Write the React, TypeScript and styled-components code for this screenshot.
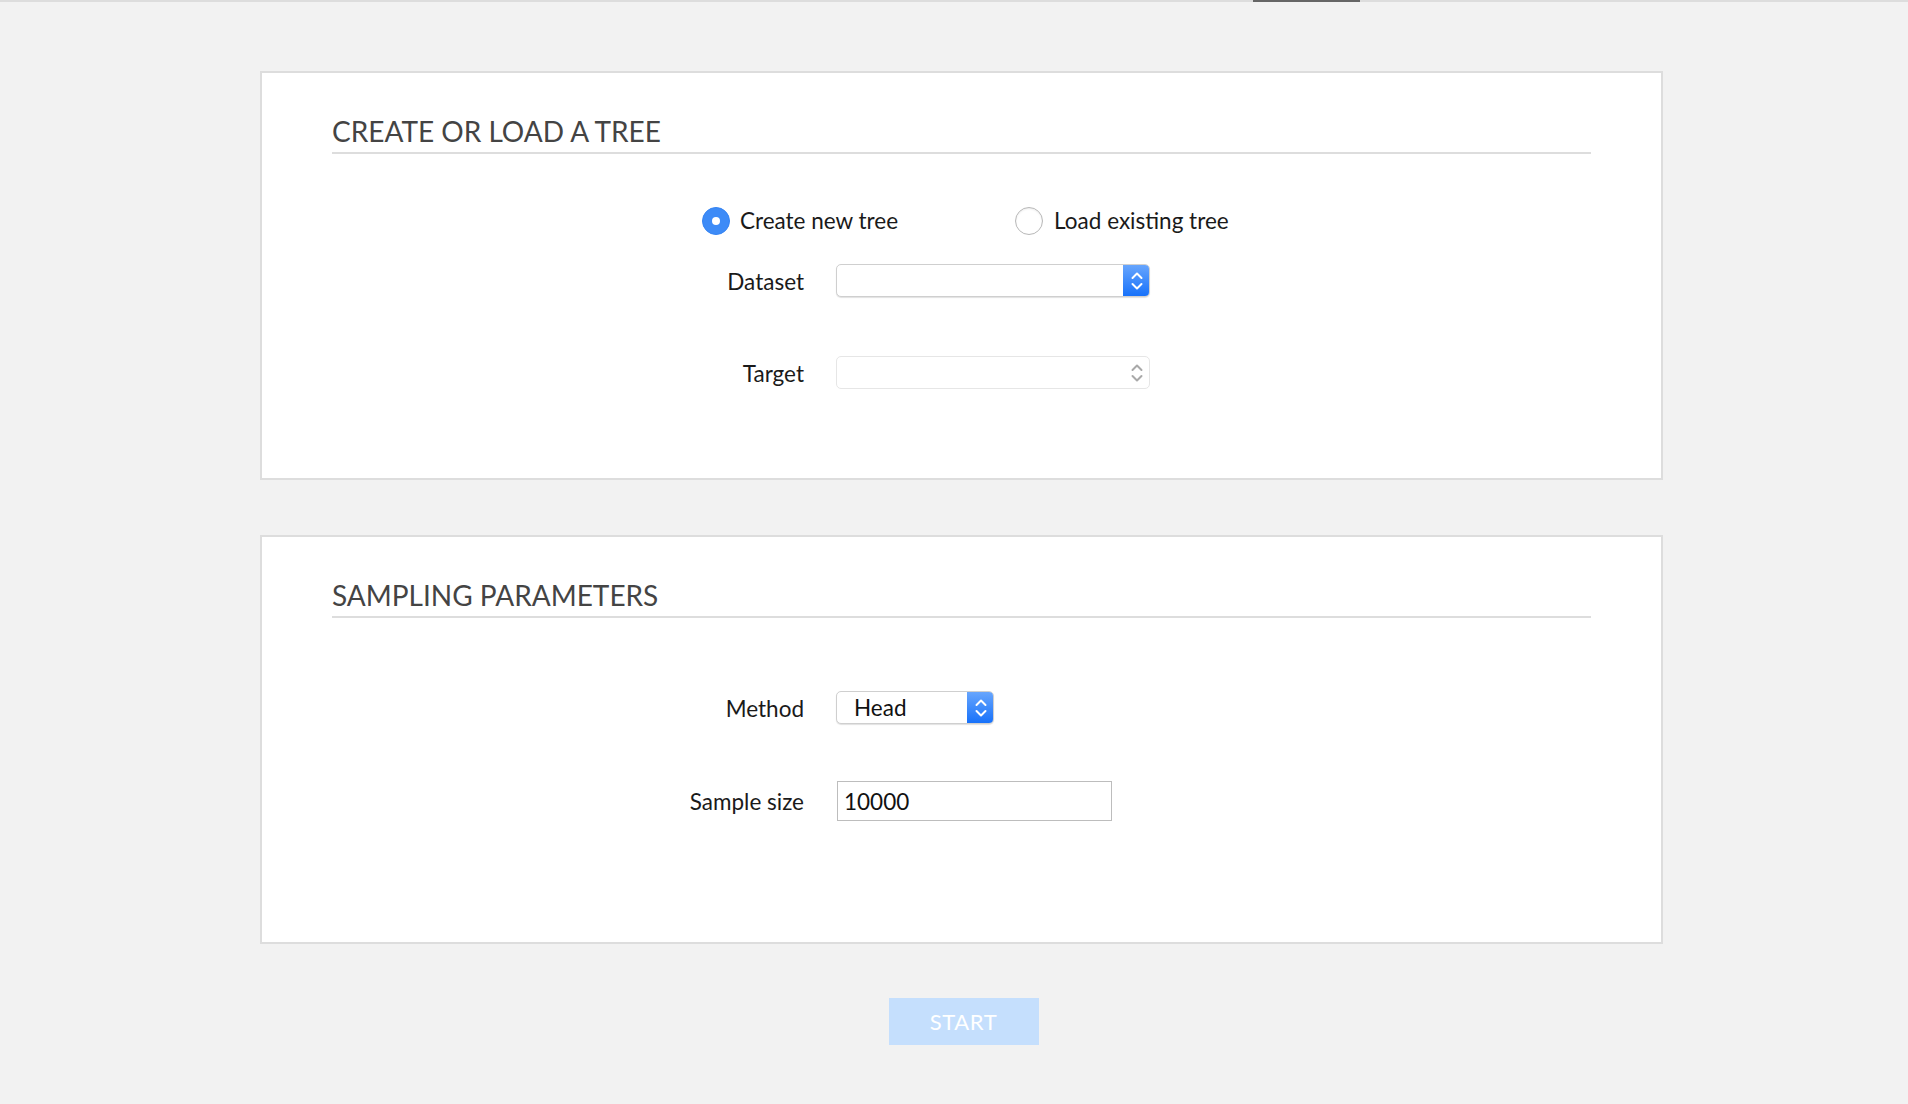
import React from 'react';
import styled, { createGlobalStyle } from 'styled-components';

const GlobalStyle = createGlobalStyle`
  html, body {
    margin: 0;
    padding: 0;
    background: #f2f2f2;
  }
  body {
    font-family: Lato, "Noto Sans", "Liberation Sans", sans-serif;
    color: #1a1a1a;
  }
`;

const TopBar = styled.div`
  height: 2px;
  background: #dddddd;
  display: flex;
`;

const TopIndicator = styled.div`
  margin-left: 1253px;
  width: 107px;
  height: 2px;
  background: #666666;
`;

const Page = styled.div`
  padding: 69px 245px 60px 260px;
  display: flex;
  flex-direction: column;
  gap: 55px;
`;

const Card = styled.section`
  box-sizing: border-box;
  min-height: 409px;
  background: #ffffff;
  border: 2px solid #dddddd;
  padding: 41px 70px 40px;
`;

const CardTitle = styled.h2`
  margin: 0;
  font-size: 28px;
  line-height: 34px;
  font-weight: 400;
  color: #444444;
  text-transform: uppercase;
  padding-bottom: 4px;
  border-bottom: 2px solid #dddddd;
`;

const RadioRow = styled.div`
  display: flex;
  justify-content: flex-start;
  gap: 117px;
  margin-top: 53px;
  padding-left: 370px;
`;

const RadioOption = styled.label<{ $gap: number }>`
  display: flex;
  align-items: center;
  gap: ${({ $gap }) => $gap}px;
  font-size: 22.5px;
  line-height: 28px;
  cursor: pointer;
`;

const RadioDot = styled.span<{ $checked?: boolean }>`
  box-sizing: border-box;
  width: 28px;
  height: 28px;
  border-radius: 50%;
  display: flex;
  align-items: center;
  justify-content: center;
  background: ${({ $checked }) => ($checked ? '#3d8bf7' : '#ffffff')};
  border: 1px solid ${({ $checked }) => ($checked ? '#3584f3' : '#b8b8b8')};
  box-shadow: ${({ $checked }) => ($checked ? 'none' : 'inset 0 1px 2px rgba(0,0,0,0.08)')};

  &::after {
    content: '';
    width: 8px;
    height: 8px;
    border-radius: 50%;
    background: #ffffff;
    display: ${({ $checked }) => ($checked ? 'block' : 'none')};
  }
`;

const FormGrid = styled.div<{ $top: number; $rowGap: number }>`
  display: grid;
  grid-template-columns: 472px auto;
  column-gap: 32px;
  row-gap: ${({ $rowGap }) => $rowGap}px;
  align-items: center;
  margin-top: ${({ $top }) => $top}px;
`;

const FieldLabel = styled.div`
  text-align: right;
  font-size: 22.5px;
  line-height: 28px;
  color: #1a1a1a;
  transform: translateY(1px);
`;

const SelectBox = styled.div<{ $width: number; $disabled?: boolean }>`
  box-sizing: border-box;
  width: ${({ $width }) => $width}px;
  height: 33px;
  display: flex;
  align-items: stretch;
  background: #ffffff;
  border: 1px solid ${({ $disabled }) => ($disabled ? '#e6e6e6' : '#cfcfcf')};
  border-radius: 5px;
  box-shadow: ${({ $disabled }) => ($disabled ? 'none' : '0 1px 1px rgba(0,0,0,0.12)')};
  overflow: hidden;
`;

const SelectValue = styled.div`
  flex: 1;
  display: flex;
  align-items: center;
  padding-left: 17px;
  font-size: 22.5px;
  color: #111111;
`;

const SelectArrow = styled.div<{ $disabled?: boolean }>`
  width: 27px;
  display: flex;
  align-items: center;
  justify-content: center;
  background: ${({ $disabled }) =>
    $disabled ? 'transparent' : 'linear-gradient(#6aa7fd, #1570fa)'};
  color: ${({ $disabled }) => ($disabled ? '#a9a9a9' : '#ffffff')};
  margin: -1px -1px -1px 0;
`;

const TextInput = styled.input`
  box-sizing: border-box;
  width: 275px;
  height: 40px;
  margin-left: 1px;
  border: 1px solid #bdbdbd;
  border-radius: 0;
  padding: 0 6px;
  font-family: Lato, "Noto Sans", sans-serif;
  font-size: 22.5px;
  color: #111111;
  background: #ffffff;
  outline: none;
`;

const Footer = styled.div`
  display: flex;
  justify-content: center;
  margin-top: -1px;
  padding-left: 4px;
`;

const StartButton = styled.button`
  width: 150px;
  height: 47px;
  border: none;
  background: #c5dffd;
  color: #ffffff;
  font-family: Lato, "Noto Sans", sans-serif;
  font-size: 22px;
  letter-spacing: 0.6px;
  cursor: default;
`;

const Chevrons = () => (
  <svg width="12" height="20" viewBox="0 0 12 20" fill="none">
    <path
      d="M1.5 7 L6 2.5 L10.5 7 M1.5 13 L6 17.5 L10.5 13"
      stroke="currentColor"
      strokeWidth="2"
      strokeLinecap="round"
      strokeLinejoin="round"
    />
  </svg>
);

const Select = ({ width, value, disabled }: { width: number; value?: string; disabled?: boolean }) => (
  <SelectBox $width={width} $disabled={disabled}>
    <SelectValue>{value}</SelectValue>
    <SelectArrow $disabled={disabled}>
      <Chevrons />
    </SelectArrow>
  </SelectBox>
);

const App = () => {
  return (
    <>
      <GlobalStyle />
      <TopBar>
        <TopIndicator />
      </TopBar>
      <Page>
        <Card>
          <CardTitle>Create or load a tree</CardTitle>
          <RadioRow>
            <RadioOption $gap={10}>
              <RadioDot $checked />
              Create new tree
            </RadioOption>
            <RadioOption $gap={11}>
              <RadioDot />
              Load existing tree
            </RadioOption>
          </RadioRow>
          <FormGrid $top={29} $rowGap={59}>
            <FieldLabel>Dataset</FieldLabel>
            <Select width={314} />
            <FieldLabel>Target</FieldLabel>
            <Select width={314} disabled />
          </FormGrid>
        </Card>
        <Card>
          <CardTitle>Sampling parameters</CardTitle>
          <FormGrid $top={73} $rowGap={57}>
            <FieldLabel>Method</FieldLabel>
            <Select width={158} value="Head" />
            <FieldLabel>Sample size</FieldLabel>
            <TextInput defaultValue="10000" />
          </FormGrid>
        </Card>
        <Footer>
          <StartButton>START</StartButton>
        </Footer>
      </Page>
    </>
  );
};

export default App;
